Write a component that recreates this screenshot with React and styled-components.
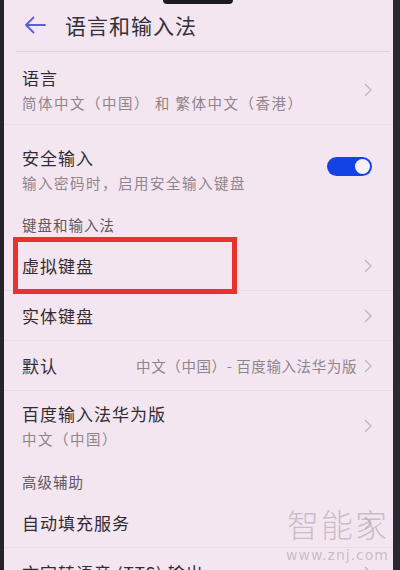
import React from "react";
import styled, { createGlobalStyle } from "styled-components";

const Global = createGlobalStyle`
  html, body { margin: 0; padding: 0; background: #1e1c22; }
  body { font-family: "Noto Sans CJK SC", "Noto Sans", sans-serif; }
`;

const Phone = styled.div`
  position: relative;
  width: 400px;
  height: 570px;
  overflow: hidden;
  display: flex;
  background: #1e1c22;
`;

const Bezel = styled.div`
  width: ${(p) => p.$w}px;
  flex: none;
  background: ${(p) => p.$c};
`;

const Screen = styled.div`
  position: relative;
  flex: 1;
  background: #f4e6f1;
  display: flex;
  flex-direction: column;
  color: #302b30;
  overflow: hidden;
`;

const Notch = styled.div`
  position: absolute;
  top: 0;
  left: 159px;
  width: 70px;
  height: 4px;
  background: #1b1a1e;
  border-radius: 0 0 8px 8px;
`;

const Header = styled.div`
  flex: none;
  height: 52px;
  display: flex;
  align-items: center;
  padding: 4px 0 6px 8px;
  box-sizing: border-box;
  gap: 19px;
  border-bottom: 1.5px solid #ddd0da;
  margin: 0 3px 0 12px;
`;

const Title = styled.div`
  font-size: 21px;
  letter-spacing: 1px;
  color: #333036;
`;

const Row = styled.div`
  position: relative;
  display: flex;
  align-items: center;
  justify-content: space-between;
  height: ${(p) => p.$h}px;
  padding: ${(p) => p.$pt || 0}px 21px 0 18px;
  box-sizing: border-box;
  border-bottom: 1px solid ${(p) => (p.$line ? "rgba(120,90,110,0.07)" : "transparent")};
  flex: none;
`;

const Texts = styled.div`
  display: flex;
  flex-direction: column;
  gap: 3px;
`;

const Label = styled.div`
  font-size: 17px;
  letter-spacing: 1px;
  line-height: 22px;
  color: #312c31;
`;

const Sub = styled.div`
  font-size: 14.5px;
  letter-spacing: 1.5px;
  line-height: 21px;
  color: #8e858c;
`;

const Section = styled.div`
  height: ${(p) => p.$h}px;
  display: flex;
  align-items: flex-end;
  padding: 0 0 ${(p) => p.$pb}px 18px;
  box-sizing: border-box;
  font-size: 14.5px;
  letter-spacing: 1px;
  color: #5f585f;
  flex: none;
`;

const Right = styled.div`
  display: flex;
  align-items: center;
  gap: 7px;
`;

const Value = styled.div`
  font-size: 14.5px;
  letter-spacing: 0.6px;
  color: #8e858c;
`;

const Toggle = styled.div`
  width: 45px;
  height: 19px;
  border-radius: 10px;
  background: #1443e3;
  display: flex;
  align-items: center;
  justify-content: flex-end;
  padding: 0 2px;
  box-sizing: border-box;
  margin-bottom: 6px;
`;

const Knob = styled.div`
  width: 15px;
  height: 15px;
  border-radius: 50%;
  background: #f6f1f6;
`;

const Highlight = styled.div`
  position: absolute;
  left: 9px;
  top: -4px;
  width: 224px;
  height: 57px;
  border: 5px solid #e8322f;
  box-sizing: border-box;
`;

const Watermark = styled.div`
  position: absolute;
  left: 279px;
  top: 505px;
  display: flex;
  flex-direction: column;
  align-items: flex-end;
  width: 106px;
  color: rgba(180, 170, 183, 0.7);
  pointer-events: none;
`;

const WmBig = styled.div`
  font-size: 32px;
  font-weight: 300;
  letter-spacing: 2px;
  line-height: 36px;
`;

const WmSmall = styled.div`
  font-family: "DejaVu Sans", sans-serif;
  font-size: 14px;
  line-height: 18px;
  margin-top: 5px;
  letter-spacing: 1px;
`;

const Chevron = () => (
  <svg width="8" height="14" viewBox="0 0 8 14">
    <polyline points="1,1 7,7 1,13" fill="none" stroke="#bdb3bb" strokeWidth="1.3" />
  </svg>
);

const Back = () => (
  <svg width="22" height="18" viewBox="0 0 22 18">
    <path d="M21 9 H2 M9.5 1.5 L2 9 L9.5 16.5" fill="none" stroke="#5a5fd8" strokeWidth="1.8" strokeLinecap="round" strokeLinejoin="round" />
  </svg>
);

export default function App() {
  return (
    <>
      <Global />
      <Phone>
        <Bezel $w={4} $c="#26242a" />
        <Screen>
          <Header>
            <Back />
            <Title>语言和输入法</Title>
          </Header>
          <Row $h={73} $pt={4} $line>
            <Texts>
              <Label>语言</Label>
              <Sub>简体中文（中国） 和 繁体中文（香港）</Sub>
            </Texts>
            <Chevron />
          </Row>
          <Row $h={80} $pt={10}>
            <Texts>
              <Label>安全输入</Label>
              <Sub>输入密码时，启用安全输入键盘</Sub>
            </Texts>
            <Toggle>
              <Knob />
            </Toggle>
          </Row>
          <Section $h={36} $pb={6}>键盘和输入法</Section>
          <Row $h={50} $line>
            <Label>虚拟键盘</Label>
            <Chevron />
            <Highlight />
          </Row>
          <Row $h={50} $line>
            <Label>实体键盘</Label>
            <Chevron />
          </Row>
          <Row $h={50} $line>
            <Label>默认</Label>
            <Right>
              <Value>中文（中国）- 百度输入法华为版</Value>
              <Chevron />
            </Right>
          </Row>
          <Row $h={71}>
            <Texts>
              <Label>百度输入法华为版</Label>
              <Sub>中文（中国）</Sub>
            </Texts>
            <Chevron />
          </Row>
          <Section $h={36} $pb={6}>高级辅助</Section>
          <Row $h={50} $line>
            <Label>自动填充服务</Label>
            <Chevron />
          </Row>
          <Row $h={50}>
            <Label>文字转语音 (TTS) 输出</Label>
            <Chevron />
          </Row>
          <Notch />
          <Watermark>
            <WmBig>智能家</WmBig>
            <WmSmall>www.znj.com</WmSmall>
          </Watermark>
        </Screen>
        <Bezel $w={7} $c="#2a2830" />
      </Phone>
    </>
  );
}
